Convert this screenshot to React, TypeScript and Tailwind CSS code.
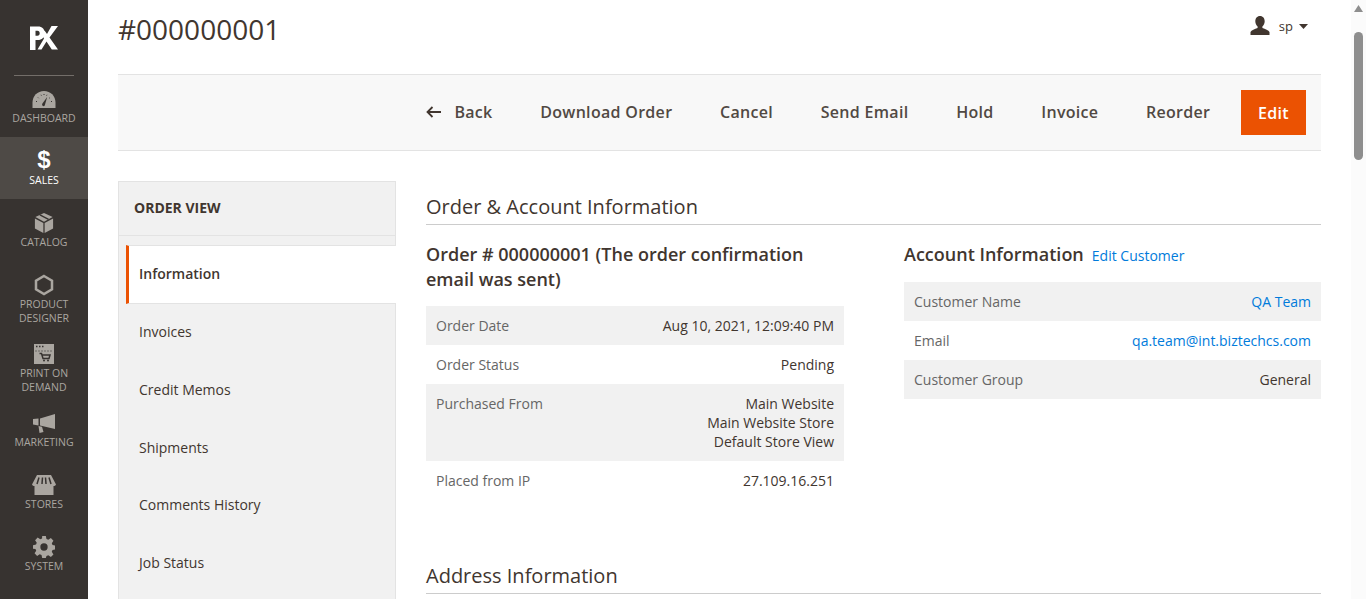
import type { ReactNode } from "react";

function Logo() {
  return (
    <svg width="28" height="24" viewBox="0 0 28 24" fill="#fff">
      <path fillRule="evenodd" d="M0 .5h8c4.200 0 6.500 2.300 6.500 6.500 0 4.400-2.500 7-6.800 7H5.500v10H0V.5zm5.500 4.300v4.900H7.500c1.500 0 2.200-1 2.200-2.500S9 4.800 7.500 4.800H5.500z" />
      <path d="M21.500 0H28L19.500 11.500 28 23.500h-6.200L16.500 15.500 11.500 23.500H7.500L14 12.500 11 7.500l3.500-3 2.500 3.500L21.500 0z" />
    </svg>
  );
}

const icons: Record<string, ReactNode> = {
  dashboard: (
    <svg width="24" height="17" viewBox="0 0 24 17" fill="currentColor">
      <path d="M12 0C5.500 0 .5 5 .5 11.500V17h23v-5.500C23.500 5 18.500 0 12 0z" />
      <path d="M11 15c-1-.6-1.100-1.700-.6-2.600l4.800-6.400-2.300 7.900c-.4 1-1.100 1.500-1.900 1.100z" fill="#373330" />
      <path d="M4 10.500h1M6 6.500l.7.7M9 3.800l.4.800M12 3v1M15 3.800l-.4.800M18 6.500l-.7.7M20 10.500h-1" stroke="#373330" strokeWidth="1" />
    </svg>
  ),
  sales: <span className="text-[24px] leading-[22px] font-bold text-white font-['Liberation_Sans',sans-serif]">$</span>,
  catalog: (
    <svg width="20" height="20" viewBox="0 0 20 22" fill="currentColor">
      <path d="M10 0l9.500 4.500L10 9.500.5 4.500 10 0z" />
      <path d="M0 6l9.300 5v11L0 17V6zM20 6l-9.300 5v11L20 17V6z" />
      <path d="M5.500 2l9.500 5" stroke="#373330" strokeWidth="1.500" />
    </svg>
  ),
  designer: (
    <svg width="20" height="22" viewBox="0 0 20 22" fill="none" stroke="currentColor" strokeWidth="2.500">
      <path d="M10 2l8 4.600v8.800L10 20l-8-4.600V6.600L10 2z" />
    </svg>
  ),
  print: (
    <svg width="20" height="20" viewBox="0 0 20 20">
      <rect width="20" height="20" fill="currentColor" />
      <path d="M2 2.500h1.500M5 2.500h1.500M8 2.500h1.500" stroke="#373330" strokeWidth="1.500" />
      <path d="M1 7h18" stroke="#8a8782" strokeWidth="2" strokeDasharray="2 1" />
      <path d="M5.500 9.500h2l1.500 5h6l1-3.500H8" fill="none" stroke="#373330" strokeWidth="1.500" />
      <circle cx="10" cy="16.500" r="1" fill="#373330" />
      <circle cx="14" cy="16.500" r="1" fill="#373330" />
    </svg>
  ),
  marketing: (
    <svg width="23" height="19" viewBox="0 0 23 19" fill="currentColor">
      <path d="M22 0v15L7 11.500V4.500L22 0z" />
      <path d="M0 5l5.500-.5v7L0 10.500V5z" />
      <path d="M5.500 12l3.500.8L10.500 18l-4 1L5.500 12z" />
    </svg>
  ),
  stores: (
    <svg width="24" height="20" viewBox="0 0 24 20" fill="currentColor">
      <path d="M5 0h14l5 9.500c-.5 1-1.500 1.500-2.500 1.500V20h-19v-9C1.500 11 .5 10.500 0 9.500L5 0z" />
      <path d="M7 2.500L5 9M10.500 2.500L10 9M13.500 2.500L14 9M17 2.500L19 9" stroke="#373330" strokeWidth="1.500" />
    </svg>
  ),
  system: (
    <svg width="22" height="22" viewBox="0 0 24 24" fill="currentColor" className="-mt-[1px]">
      <path d="M10 0h4l.7 3.300 2 .8L19.500 2.300l2.800 2.800-1.800 2.800.8 2 3.300.7v4l-3.300.7-.8 2 1.800 2.800-2.800 2.800-2.800-1.800-2 .8L14 24h-4l-.7-3.300-2-.8-2.800 1.800-2.800-2.800 1.800-2.800-.8-2L0 14v-4l3.300-.7.8-2L2.300 4.500l2.800-2.800 2.800 1.800 2-.8L10 0zm2 8a4 4 0 100 8 4 4 0 000-8z" fillRule="evenodd" />
    </svg>
  ),
};

const navItems = [
  { key: "dashboard", label: ["DASHBOARD"], h: "h-[61px] pt-[11px]" },
  { key: "sales", label: ["SALES"], h: "h-[62px] pt-[12px]", active: true },
  { key: "catalog", label: ["CATALOG"], h: "h-[62px] pt-[12px]" },
  { key: "designer", label: ["PRODUCT", "DESIGNER"], h: "h-[69px] pt-[12px]" },
  { key: "print", label: ["PRINT ON", "DEMAND"], h: "h-[69px] pt-[12px]" },
  { key: "marketing", label: ["MARKETING"], h: "h-[62px] pt-[12px]" },
  { key: "stores", label: ["STORES"], h: "h-[62px] pt-[12px]" },
  { key: "system", label: ["SYSTEM"], h: "h-[62px] pt-[12px]" },
];

function Sidebar() {
  return (
    <aside className="w-[88px] shrink-0 bg-[#373330] flex flex-col">
      <div className="h-[76px] mx-[14px] flex items-center justify-center border-b border-[#736e69] pt-[1px]">
        <Logo />
      </div>
      {navItems.map((item) => (
        <div
          key={item.key}
          className={`${item.h} flex flex-col items-center ${item.active ? "bg-[#4e4a46] text-white" : "text-[#aaa6a0]"}`}
        >
          <div className={`flex items-center justify-center ${item.active ? "h-[22px] mb-[2px]" : "h-[24px]"}`}>{icons[item.key]}</div>
          {item.label.map((l) => (
            <div key={l} className="text-[10.5px] leading-[14px] text-center">{l}</div>
          ))}
        </div>
      ))}
    </aside>
  );
}

function ActionBar() {
  const actions = ["Download Order", "Cancel", "Send Email", "Hold", "Invoice", "Reorder"];
  return (
    <div className="h-[77px] bg-[#f8f8f8] border-y border-[#e3e3e3] flex items-center justify-end pr-[15px] gap-[47.700px] pb-[2px] text-[16px] font-semibold text-[#514943] tracking-[0.3px]">
      <div className="flex items-center gap-[13px]">
        <svg width="15" height="12" viewBox="0 0 15 12" fill="none" stroke="#41362f" strokeWidth="1.800">
          <path d="M15 6H2M6.500 1L1.500 6l5 5" />
        </svg>
        <span>Back</span>
      </div>
      {actions.map((a) => (
        <span key={a}>{a}</span>
      ))}
      <button className="w-[65px] h-[45px] bg-[#eb5202] text-white font-semibold -ml-[17px] mt-[2px]">Edit</button>
    </div>
  );
}

function Tabs() {
  const rest = [
    { t: "Invoices", h: "h-[58px]" },
    { t: "Credit Memos", h: "h-[58px]" },
    { t: "Shipments", h: "h-[58px]" },
    { t: "Comments History", h: "h-[57px]" },
    { t: "Job Status", h: "h-[58px]" },
  ];
  return (
    <div className="w-[278px] h-[450px] shrink-0 bg-[#f1f1f1] border-x border-t border-[#e3e3e3]">
      <div className="h-[54px] flex items-center pl-[15px] pb-[2px] text-[14px] font-bold text-[#41362f] border-b border-[#e3e3e3]">
        ORDER VIEW
      </div>
      <div className="h-[9px]" />
      <div className="h-[59px] -mr-[1px] ml-[7px] bg-white border-l-[3px] border-l-[#eb5202] border-y border-y-[#e3e3e3] flex items-center pl-[10px] pb-[2px] text-[14px] font-semibold text-[#41362f]">
        Information
      </div>
      {rest.map((r) => (
        <div key={r.t} className={`${r.h} flex items-center pl-[20px] pb-[4px] text-[14px] text-[#41362f]`}>
          {r.t}
        </div>
      ))}
    </div>
  );
}

function InfoRow({ label, children, shaded, link }: { label: string; children: ReactNode; shaded?: boolean; link?: boolean }) {
  return (
    <div className={`flex justify-between px-[10px] py-[10px] text-[14px] leading-[19px] ${shaded ? "bg-[#f1f1f1]" : ""}`}>
      <span className="text-[#666]">{label}</span>
      <div className={`text-right ${link ? "text-[#007bdb]" : "text-[#41362f]"}`}>{children}</div>
    </div>
  );
}

function SectionTitle({ children }: { children: ReactNode }) {
  return (
    <div className="text-[20px] leading-[26px] text-[#41362f] pb-[4px] border-b border-[#cccccc]">{children}</div>
  );
}

export default function App() {
  return (
    <div className="h-[599px] overflow-hidden flex bg-white font-['Open_Sans',sans-serif] text-[#41362f]">
      <Sidebar />
      <main className="flex-1 px-[30px] min-w-0">
        <header className="h-[74px] flex justify-between items-start pt-[8px]">
          <h1 className="text-[28px] leading-[42px] text-[#41362f]">#000000001</h1>
          <div className="flex items-center pr-[13px] pt-[6px] text-[13px]">
            <svg width="20" height="19" viewBox="0 0 20 19" fill="#41362f">
              <path d="M10 0c3 0 4.700 2.300 4.700 5.200 0 2.200-1 4.300-2.300 5.300v1.400c2.700.9 6.300 2.200 7.100 4.100V19H.5v-3c.8-1.900 4.400-3.200 7.100-4.100v-1.400C6.300 9.500 5.300 7.400 5.300 5.200 5.300 2.300 7 0 10 0z" />
            </svg>
            <span className="ml-[9px] mt-[3px]">sp</span>
            <svg width="9" height="5" viewBox="0 0 9 5" fill="#41362f" className="ml-[6px] mt-[2px]">
              <path d="M0 0h9L4.500 5z" />
            </svg>
          </div>
        </header>
        <ActionBar />
        <div className="flex gap-[30px] pt-[30px]">
          <Tabs />
          <section className="flex-1 min-w-0 pt-[13px]">
            <SectionTitle>Order &amp; Account Information</SectionTitle>
            <div className="flex gap-[60px] pt-[17px]">
              <div className="w-[418px]">
                <h2 className="text-[18px] leading-[25px] font-semibold text-[#41362f] mb-[14px]">
                  Order # 000000001 (The order confirmation email was sent)
                </h2>
                <InfoRow label="Order Date" shaded>Aug 10, 2021, 12:09:40 PM</InfoRow>
                <InfoRow label="Order Status">Pending</InfoRow>
                <InfoRow label="Purchased From" shaded>
                  <div>Main Website</div>
                  <div>Main Website Store</div>
                  <div>Default Store View</div>
                </InfoRow>
                <InfoRow label="Placed from IP">27.109.16.251</InfoRow>
              </div>
              <div className="flex-1">
                <div className="flex items-baseline gap-[8px] mb-[15px]">
                  <h2 className="text-[18px] leading-[25px] font-semibold text-[#41362f]">Account Information</h2>
                  <span className="text-[14px] text-[#007bdb]">Edit Customer</span>
                </div>
                <InfoRow label="Customer Name" shaded link>QA Team</InfoRow>
                <InfoRow label="Email" link>qa.team@int.biztechcs.com</InfoRow>
                <InfoRow label="Customer Group" shaded>General</InfoRow>
              </div>
            </div>
            <div className="mt-[63px]">
              <SectionTitle>Address Information</SectionTitle>
            </div>
          </section>
        </div>
      </main>
      <div className="w-[15px] shrink-0 bg-[#fbfbfb] flex flex-col items-center pt-[5px]">
        <svg width="9" height="7" viewBox="0 0 9 7" fill="#8e8e8e" className="mb-[20px]">
          <path d="M4.500 0L9 7H0z" />
        </svg>
        <div className="w-[9px] h-[128px] rounded-[5px] bg-[#8e8e8e]" />
      </div>
    </div>
  );
}
